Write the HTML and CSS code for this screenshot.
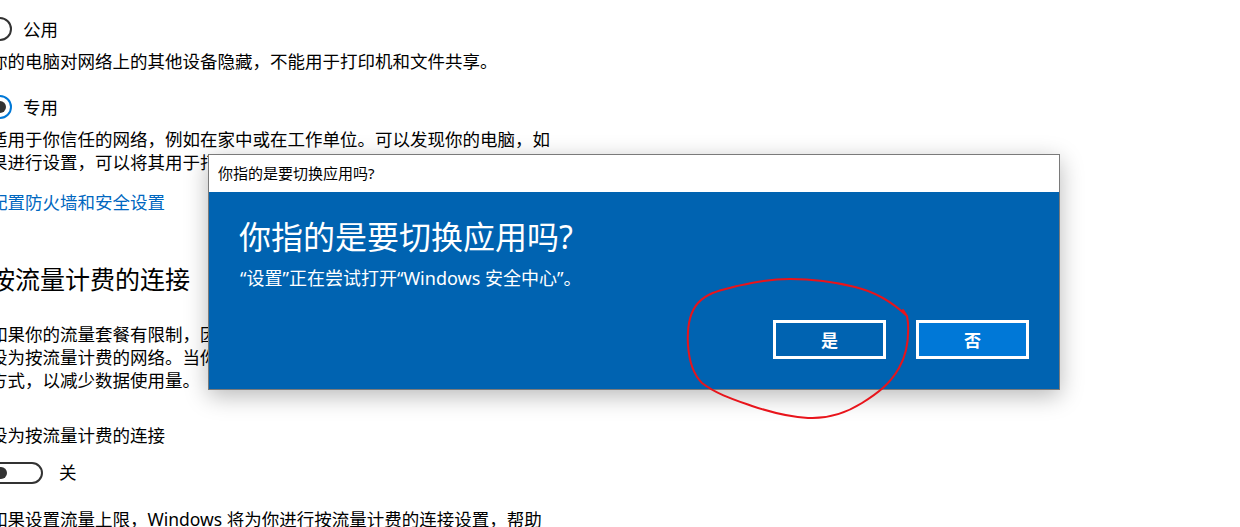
FILE: index.html
```html
<!DOCTYPE html>
<html>
<head>
    <meta name="viewport" content="width=device-width, initial-scale=1.0">
    <title>网络配置文件</title>
    <link rel="stylesheet" href="styles.css">
</head>
<body>
    <div class="settings">
        <div class="radio-row first-row">
            <span class="radio"></span>
            <span>公用</span>
        </div>
        <p class="desc">你的电脑对网络上的其他设备隐藏，不能用于打印机和文件共享。</p>
        <div class="radio-row">
            <span class="radio checked"></span>
            <span>专用</span>
        </div>
        <p class="desc">适用于你信任的网络，例如在家中或在工作单位。可以发现你的电脑，如<br>果进行设置，可以将其用于打印机和文件共享。</p>
        <a class="link" href="#">配置防火墙和安全设置</a>

        <h2 class="section-title">按流量计费的连接</h2>
        <p class="desc metered">如果你的流量套餐有限制，因此希望更好地控制数据使用量，请将此连接<br>设为按流量计费的网络。当你连接到此网络时，某些应用可能以不同的工作<br>方式，以减少数据使用量。</p>
        <div class="label">设为按流量计费的连接</div>
        <div class="toggle-row">
            <span class="toggle"><span class="knob"></span></span>
            <span>关</span>
        </div>
        <p class="desc">如果设置流量上限，Windows 将为你进行按流量计费的连接设置，帮助</p>
    </div>

    <div class="dialog">
        <div class="dialog-title">你指的是要切换应用吗?</div>
        <div class="dialog-body">
            <h1>你指的是要切换应用吗?</h1>
            <p class="dialog-msg">“设置”正在尝试打开“Windows 安全中心”。</p>
            <div class="dialog-buttons">
                <button class="dlg-btn">是</button>
                <button class="dlg-btn primary">否</button>
            </div>
        </div>
    </div>

    <svg class="scribble" width="1240" height="527" viewBox="0 0 1240 527">
        <path d="M903 310 L907 316 L908 323 C909 340 906 356 899 368 C890 384 878 393 862 403 C846 413 827 419 808 418 C788 417 770 412 752 406 C735 400 716 394 702 383 C692 373 689 360 688 345 C687 328 689 313 698 303 C708 292 722 290 737 286 C756 282 770 279 790 279 C812 279 835 282 855 287 C872 291 889 299 907 316"
              fill="none" stroke="#e8141b" stroke-width="2" stroke-linecap="round" stroke-linejoin="round"/>
    </svg>
</body>
</html>
```

FILE: styles.css
```css
html {
    overflow: hidden;
}
body {
    margin: 0;
    background: #ffffff;
    color: #000000;
    font-family: "Noto Sans", "Noto Sans CJK SC", sans-serif;
    overflow: hidden;
    height: 527px;
}
.settings {
    margin-left: -10px;
    padding-top: 17px;
    font-size: 17.5px;
    line-height: 23px;
    white-space: nowrap;
}
.radio-row {
    display: flex;
    align-items: center;
    gap: 11px;
    height: 24px;
    margin-left: -2px;
    margin-top: 22px;
}
.radio-row.first-row {
    margin-top: 0;
}
.radio {
    box-sizing: border-box;
    width: 24px;
    height: 24px;
    border: 2px solid #333333;
    border-radius: 50%;
    display: flex;
    align-items: center;
    justify-content: center;
}
.radio.checked {
    border-color: #0078d7;
}
.radio.checked::after {
    content: "";
    width: 12px;
    height: 12px;
    border-radius: 50%;
    background: #333333;
}
.desc {
    margin: 9px 0 0 0;
}
.link {
    display: block;
    margin-top: 17px;
    color: #0067c0;
    text-decoration: none;
}
.section-title {
    margin: 49px 0 0 0;
    font-size: 25px;
    line-height: 32px;
    font-weight: normal;
}
.desc.metered {
    margin-top: 28px;
}
.label {
    margin-top: 32px;
}
.toggle-row {
    display: flex;
    align-items: center;
    gap: 16px;
    margin-top: 14px;
    margin-left: -2px;
}
.toggle {
    box-sizing: border-box;
    width: 55px;
    height: 22px;
    border: 2px solid #333333;
    border-radius: 11px;
    display: flex;
    align-items: center;
    padding-left: 5px;
}
.knob {
    width: 12px;
    height: 12px;
    border-radius: 50%;
    background: #333333;
}
.toggle-row + .desc {
    margin-top: 24px;
}

/* 对话框 */
.dialog {
    position: absolute;
    left: 208px;
    top: 154px;
    width: 852px;
    height: 236px;
    box-sizing: border-box;
    border: 1px solid #7a7a7a;
    background: #0063b1;
    box-shadow: 0 6px 22px rgba(0, 0, 0, 0.28);
    display: flex;
    flex-direction: column;
}
.dialog-title {
    background: #ffffff;
    height: 37px;
    line-height: 37px;
    padding-left: 9px;
    font-size: 15px;
    color: #000000;
}
.dialog-body {
    flex: 1;
    display: flex;
    flex-direction: column;
    padding: 24px 30px 30px 30px;
    color: #ffffff;
}
.dialog-body h1 {
    margin: 0;
    font-size: 32px;
    line-height: 42px;
    font-weight: normal;
}
.dialog-msg {
    margin: 8px 0 0 1px;
    font-size: 18px;
    line-height: 24px;
}
.dialog-buttons {
    margin-top: auto;
    display: flex;
    justify-content: flex-end;
    gap: 30px;
}
.dlg-btn {
    box-sizing: border-box;
    width: 113px;
    height: 39px;
    border: 3px solid #ffffff;
    background: #0063b1;
    color: #ffffff;
    font-family: "Noto Sans", "Noto Sans CJK SC", sans-serif;
    font-size: 17px;
    font-weight: bold;
    padding: 0;
}
.dlg-btn.primary {
    background: #0078d7;
}
.scribble {
    position: absolute;
    left: 0;
    top: 0;
    pointer-events: none;
}
```
